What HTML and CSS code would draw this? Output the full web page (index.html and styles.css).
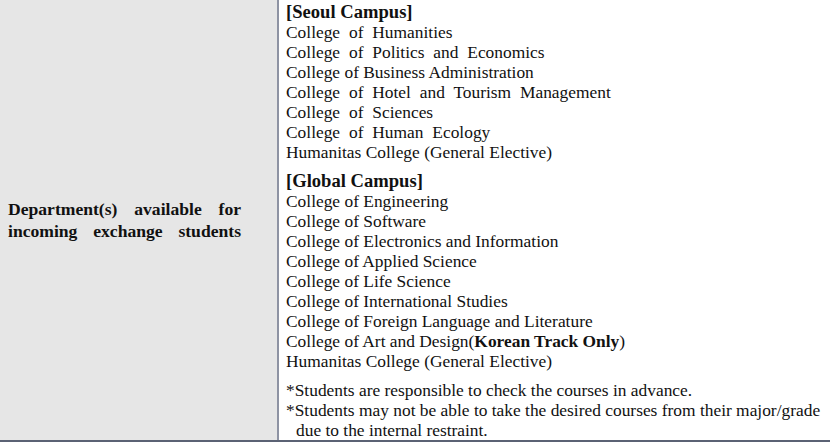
FILE: index.html
```html
<!DOCTYPE html>
<html lang="en">
<head>
    <meta charset="UTF-8">
    <meta name="viewport" content="width=device-width, initial-scale=1.0">
    <title>Departments</title>
    <link rel="stylesheet" href="styles.css">
</head>
<body>
    <div class="row">
        <div class="label">
            <p>Department(s) available for incoming exchange students</p>
        </div>
        <div class="content">
            <div class="campus">
                <div class="campus-title">[Seoul Campus]</div>
                <div class="wide">College of Humanities</div>
                <div class="wide">College of Politics and Economics</div>
                <div>College of Business Administration</div>
                <div class="wide">College of Hotel and Tourism Management</div>
                <div class="wide">College of Sciences</div>
                <div class="wide">College of Human Ecology</div>
                <div>Humanitas College (General Elective)</div>
            </div>
            <div class="campus">
                <div class="campus-title">[Global Campus]</div>
                <div>College of Engineering</div>
                <div>College of Software</div>
                <div>College of Electronics and Information</div>
                <div>College of Applied Science</div>
                <div>College of Life Science</div>
                <div>College of International Studies</div>
                <div>College of Foreign Language and Literature</div>
                <div>College of Art and Design(<b>Korean Track Only</b>)</div>
                <div>Humanitas College (General Elective)</div>
            </div>
            <div class="notes">
                <div>*Students are responsible to check the courses in advance.</div>
                <div>*Students may not be able to take the desired courses from their major/grade</div>
                <div class="indent">due to the internal restraint.</div>
            </div>
        </div>
    </div>
</body>
</html>
```

FILE: styles.css
```css
body {
    margin: 0;
    background: white;
    color: #111;
    font-family: 'Liberation Serif', 'Times New Roman', serif;
    font-size: 17.4px;
}

.row {
    display: grid;
    grid-template-columns: 279px 1fr;
    height: 440px;
    border-bottom: 2px solid #5b6274;
}

.label {
    background: #e6e6e6;
    border-right: 2px solid #8e93a3;
    display: flex;
    align-items: center;
    padding-left: 8px;
}

.label p {
    margin: 0;
    width: 233px;
    font-weight: bold;
    font-size: 17.6px;
    line-height: 22px;
    text-align: justify;
    text-align-last: justify;
}

.content {
    padding: 2px 0 0 7px;
    line-height: 20px;
}

.campus {
    margin-bottom: 9px;
}

.campus-title {
    font-weight: bold;
    font-size: 18.6px;
}

.wide {
    word-spacing: 4.5px;
}

.notes {
    margin-top: 2px;
}

.indent {
    padding-left: 10px;
}
```
